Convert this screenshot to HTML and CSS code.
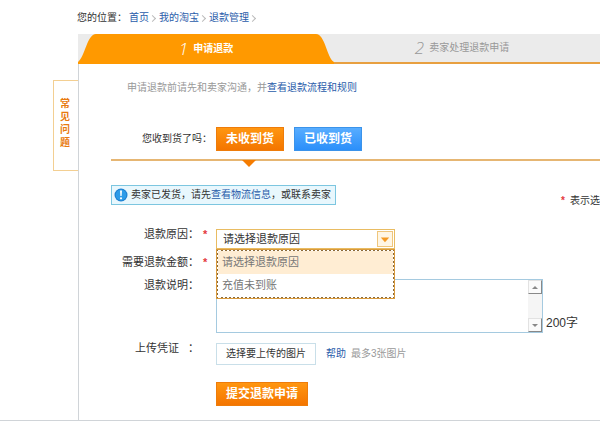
FILE: index.html
```html
<!DOCTYPE html>
<html lang="zh-CN">
<head>
<meta charset="utf-8">
<title>申请退款</title>
<link rel="stylesheet" href="styles.css">
</head>
<body>
<div class="page">
  <nav class="crumbs">
    <span class="crumbs-label">您的位置：</span>
    <a href="#">首页</a><i class="sep"></i><a href="#">我的淘宝</a><i class="sep"></i><a href="#">退款管理</a><i class="sep"></i>
  </nav>
  <div class="layout">
    <aside class="side"><a class="faq" href="#">常见问题</a></aside>
    <main class="main">
      <ol class="steps">
        <li class="step step-on">
          <svg class="step-shape" viewBox="0 0 256 30" preserveAspectRatio="none" aria-hidden="true"><path d="M0 30V28C7 23 9 0 18 0H238C247 0 249 24 256 28V30Z" fill="#ff9900"/></svg>
          <span class="step-text"><em class="num">1</em><b>申请退款</b></span>
        </li>
        <li class="step step-next"><span class="step-text"><em class="num">2</em>卖家处理退款申请</span></li>
      </ol>
      <div class="panel">
        <p class="intro">申请退款前请先和卖家沟通，并<a href="#">查看退款流程和规则</a></p>
        <div class="received">
          <span class="label label-small">您收到货了吗：</span>
          <div class="choices">
            <button type="button" class="btn btn-orange">未收到货</button>
            <button type="button" class="btn btn-blue">已收到货</button>
          </div>
        </div>
        <div class="notice-row">
          <p class="notice">
            <svg class="info" viewBox="0 0 14 14" aria-hidden="true"><circle cx="7" cy="7" r="6.5" fill="#1c7fd0"/><circle cx="7" cy="7" r="5.4" fill="#2c9be8"/><path d="M6 2.6h2l-.4 5.4h-1.2z" fill="#fff"/><circle cx="7" cy="10.3" r="1.1" fill="#fff"/></svg>
            <span>卖家已发货，请先<a href="#">查看物流信息</a>，或联系卖家</span>
          </p>
          <span class="required"><i class="star">*</i>表示选</span>
        </div>
        <form class="form">
          <div class="row">
            <label class="label" for="reason">退款原因：<i class="star">*</i></label>
            <div class="picker">
              <select id="reason" class="select"><option>请选择退款原因</option><option>充值未到账</option></select>
              <span class="arrow" aria-hidden="true"><svg viewBox="0 0 15 15"><path d="M3 6h9l-4.500 5z" fill="#f59a23"/></svg></span>
              <ul class="menu" role="listbox" aria-label="退款原因">
                <li class="option option-on" role="option" aria-selected="true">请选择退款原因</li>
                <li class="option" role="option" aria-selected="false">充值未到账</li>
              </ul>
            </div>
          </div>
          <div class="row row-amount">
            <span class="label">需要退款金额：<i class="star">*</i></span>
          </div>
          <div class="row row-desc">
            <label class="label" for="desc">退款说明：<i class="star"></i></label>
            <div class="desc">
              <div class="box">
                <textarea id="desc" class="textarea"></textarea>
                <div class="scroll" aria-hidden="true">
                  <span class="scroll-btn"><svg viewBox="0 0 12 12"><path d="M3 8h6l-3-3z" fill="#888"/></svg></span>
                  <span class="scroll-btn"><svg viewBox="0 0 12 12"><path d="M3 5h6l-3 3z" fill="#888"/></svg></span>
                </div>
              </div>
              <span class="limit">200字</span>
            </div>
          </div>
          <div class="row row-upload">
            <span class="label"><span class="label-gap">上传凭证</span>：<i class="star"></i></span>
            <div class="upload">
              <button type="button" class="file">选择要上传的图片</button>
              <a href="#">帮助</a>
              <span class="hint">最多3张图片</span>
            </div>
          </div>
          <div class="row">
            <span class="label"></span>
            <button type="submit" class="btn btn-orange">提交退款申请</button>
          </div>
        </form>
      </div>
    </main>
  </div>
</div>
</body>
</html>
```
FILE: styles.css
```css
* { box-sizing: border-box; }

body {
  margin: 0;
  background: #fff;
  color: #333;
  font: 10px/16px "Liberation Sans", "Noto Sans CJK SC", sans-serif;
}

button, select, textarea { font: inherit; color: inherit; }
a { color: #2a5caa; text-decoration: none; }
p, ol, ul { margin: 0; padding: 0; list-style: none; }
i { font-style: normal; }

.page { overflow: hidden; border-bottom: 1px solid #d0d4d8; }

.crumbs { display: flex; align-items: center; padding: 10px 0 8px 77px; }
.crumbs-label { margin-right: 2px; }
.sep {
  width: 5px;
  height: 5px;
  margin: 0 4px 0 1px;
  border: solid #bbb;
  border-width: 1px 1px 0 0;
  transform: rotate(45deg);
}

.layout { display: flex; }
.side { flex: 0 0 78px; padding: 46px 0 0 53px; }
.faq {
  display: block;
  height: 91px;
  padding: 16px 8px 0 6px;
  border: 1px solid #f3cf92;
  border-right: 0;
  color: #e87a10;
  font-weight: 700;
  line-height: 13px;
  word-break: break-all;
}

.main { flex: 1; min-width: 0; }
.steps { display: flex; height: 30px; background: #ebebeb; }
.step { display: flex; align-items: center; justify-content: center; }
.step-on { position: relative; flex: 0 0 256px; color: #fff; }
.step-shape { position: absolute; inset: 0; width: 100%; height: 100%; }
.step-next { flex: 1; padding-right: 10px; border-bottom: 2px solid #e8a040; color: #999; }
.step-text { position: relative; display: flex; align-items: center; gap: 5px; }
.num { font: italic 300 17px/20px "Open Sans", sans-serif; }

.panel { padding: 16px 0 14px 32px; border-left: 1px solid #d0d4d8; }
.intro { padding-left: 16px; color: #999; }

.label {
  display: flex;
  flex: 0 0 105px;
  justify-content: flex-end;
  white-space: nowrap;
  font-size: 11px;
}
.label-small { padding-right: 4px; font-size: 10px; }
.label-gap { margin-right: 9px; }
.star { width: 6px; margin: 0 7px 0 4px; color: #e4393c; font-weight: 700; }

.received {
  display: flex;
  align-items: center;
  margin-top: 31px;
  padding-bottom: 8px;
  border-bottom: 2px solid #e6b673;
}
.choices { display: flex; gap: 10px; }
.choices .btn-orange { position: relative; }
.choices .btn-orange::after {
  content: "";
  position: absolute;
  top: 32px;
  left: 25px;
  border: solid transparent;
  border-width: 7px 7px 0;
  border-top-color: #f57c00;
}

.btn {
  height: 24px;
  padding: 0 9px;
  border: 1px solid #ee7c0a;
  color: #fff;
  font-size: 12px;
  font-weight: 700;
  line-height: 20px;
}
.btn-orange { background: linear-gradient(#ff9610, #f47500); }
.btn-blue { border-color: #3b93ea; background: linear-gradient(#58adff, #2b8ffa); }

.notice-row { display: flex; align-items: flex-start; justify-content: space-between; margin-top: 24px; }
.notice {
  display: flex;
  align-items: center;
  gap: 3px;
  height: 20px;
  padding: 0 4px 0 2px;
  border: 1px solid #7cc6e0;
  background: #e8f7fd;
}
.info { width: 14px; height: 14px; }
.required {
  display: flex;
  flex: none;
  padding-top: 8px;
  white-space: nowrap;
}
.required .star { margin: 0 3px 0 0; }

.form { margin-top: 17px; }
.row { display: flex; align-items: flex-start; }

.picker { position: relative; width: 179px; margin-top: 3px; }
.select {
  display: block;
  width: 100%;
  height: 20px;
  padding: 0 20px 0 6px;
  border: 1px solid #e9bc62;
  border-radius: 0;
  background: #fff;
  font-size: 11px;
  appearance: none;
}
.arrow {
  position: absolute;
  top: 2px;
  right: 2px;
  width: 16px;
  height: 16px;
  border: 1px solid #efc67c;
  background: #fff6e4;
  pointer-events: none;
}
.arrow svg, .scroll-btn svg { display: block; width: 100%; height: 100%; }
.menu {
  position: absolute;
  z-index: 1;
  top: 20px;
  left: 0;
  width: 100%;
  border: 2px dotted #8a6a3a;
  background: #fff;
  outline: 1px solid #d99a3c;
  outline-offset: -1px;
}
.option { padding: 0 4px; color: #777; font-size: 11px; line-height: 23px; }
.option-on { background: #ffedd3; }

.row-amount { margin-top: 5px; }
.row-desc { margin-top: 7px; }
.desc { display: flex; align-items: flex-end; gap: 3px; margin-top: 2px; }
.box { display: flex; width: 327px; height: 54px; border: 1px solid #a5cae0; }
.textarea {
  flex: 1;
  min-width: 0;
  padding: 4px;
  border: 0;
  background: #fff;
  resize: none;
}
.scroll {
  display: flex;
  flex: 0 0 14px;
  flex-direction: column;
  justify-content: space-between;
  background: #f5f5f5;
}
.scroll-btn {
  height: 14px;
  border: 1px solid #e2e2e2;
  border-right-color: #888;
  border-bottom-color: #888;
  background: #fafafa;
}
.limit { padding-bottom: 2px; font-size: 12px; }

.row-upload { margin: 7px 0 17px; }
.upload { display: flex; align-items: center; gap: 5px; padding-top: 3px; }
.file {
  height: 22px;
  margin-right: 5px;
  padding: 0 9px;
  border: 1px solid #c9dfe9;
  background: #fff;
  line-height: 18px;
}
.hint { color: #999; }
```
